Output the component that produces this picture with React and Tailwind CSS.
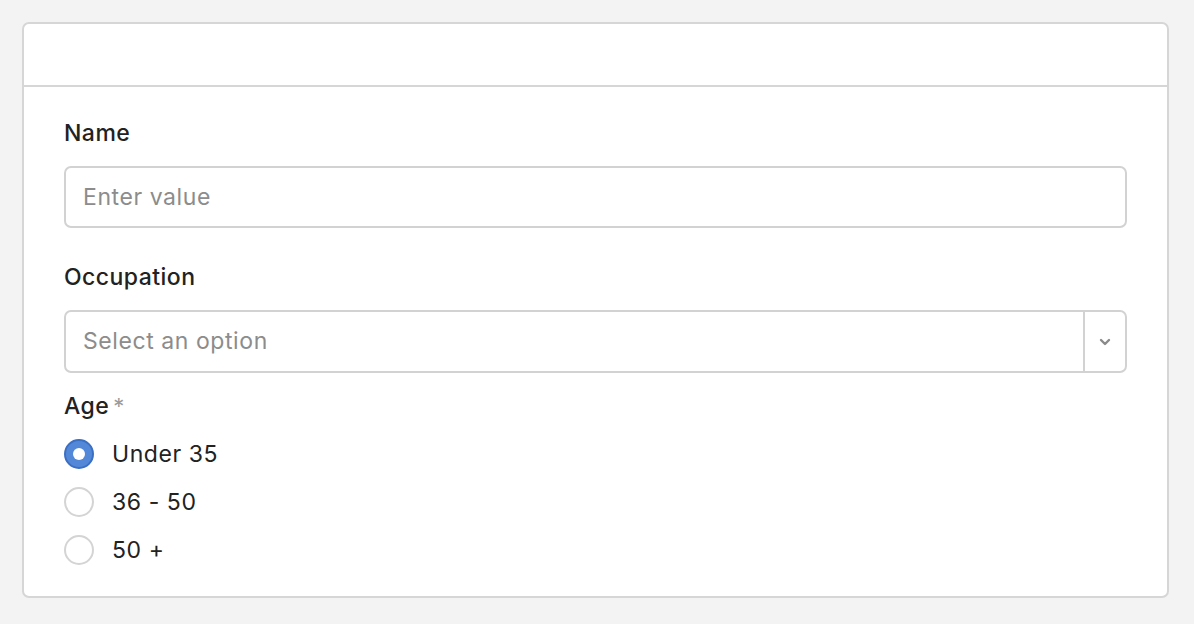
const RadioOption = ({ label, checked }) => (
  <label className="flex h-[48px] items-center gap-[18px]">
    {checked ? (
      <span className="flex h-[30px] w-[30px] items-center justify-center rounded-full border-2 border-[#3b6fc4] bg-[#5388d8]">
        <span className="h-[12px] w-[12px] rounded-full bg-white" />
      </span>
    ) : (
      <span className="h-[30px] w-[30px] rounded-full border-2 border-[#d4d4d4] bg-white" />
    )}
    <span className="text-[23px] tracking-[0.025em] text-[#222]">{label}</span>
  </label>
);

const App = () => {
  return (
    <div
      className="min-h-[624px] bg-[#f3f3f3] pt-[22px] pr-[25px] pb-[20px] pl-[22px]"
      style={{ fontFamily: "Inter, 'Noto Sans', sans-serif" }}
    >
      <div className="rounded-[7px] border-2 border-[#d6d6d6] bg-white">
        <div className="h-[63px] border-b-2 border-[#d6d6d6]" />
        <div className="px-[40px] pt-[32px] pb-[22px]">
          <div className="text-[23px] font-medium leading-[28px] tracking-[0.02em] text-[#222]">Name</div>
          <div className="mt-[19px] flex h-[62px] items-center rounded-[7px] border-2 border-[#d2d2d2] px-[17px] text-[23px] tracking-[0.025em] text-[#8c8c8c]">
            Enter value
          </div>

          <div className="mt-[35px] text-[23px] font-medium leading-[28px] tracking-[0.02em] text-[#222]">Occupation</div>
          <div className="mt-[19px] flex h-[63px] items-stretch rounded-[7px] border-2 border-[#d2d2d2] text-[23px] tracking-[0.025em] text-[#8c8c8c]">
            <div className="flex flex-1 items-center px-[17px]">Select an option</div>
            <div className="flex w-[42px] items-center justify-center border-l-2 border-[#d2d2d2]">
              <svg width="12" height="8" viewBox="0 0 12 8" fill="none">
                <path d="M2 2l4 4 4-4" stroke="#8a8a8a" strokeWidth="2.4" strokeLinecap="round" strokeLinejoin="round" />
              </svg>
            </div>
          </div>

          <div className="mt-[19px] flex items-start text-[23px] font-medium leading-[28px] tracking-[0.02em] text-[#222]">
            Age
            <span className="ml-[4px] text-[22px] font-normal text-[#9a9a9a]">*</span>
          </div>
          <div className="mt-[10px] flex flex-col">
            <RadioOption label="Under 35" checked />
            <RadioOption label="36 - 50" />
            <RadioOption label="50 +" />
          </div>
        </div>
      </div>
    </div>
  );
};

export default App;
